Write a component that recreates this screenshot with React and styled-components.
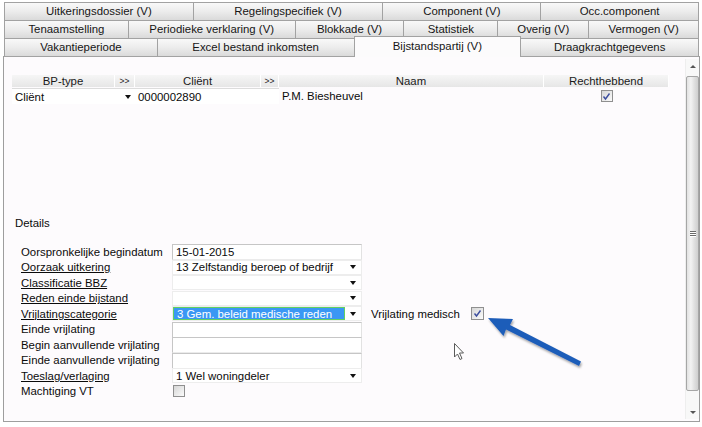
import React from 'react';
import styled, { createGlobalStyle } from 'styled-components';

const GlobalStyle = createGlobalStyle`
  html, body {
    margin: 0;
    padding: 0;
    background: #ffffff;
  }

  body {
    font-family: "Liberation Sans", Arial, sans-serif;
    font-size: 11.4px;
    color: #0a0a0a;
  }
`;

const Screen = styled.div`
  position: relative;
  width: 702px;
  height: 427px;
  overflow: hidden;
  background: #ffffff;
`;

const TabStrip = styled.div`
  display: flex;
  flex-direction: column;
  padding: 2px 3px 0 4px;
`;

const TabRow = styled.div`
  display: flex;
  height: 18px;
  align-items: flex-start;
`;

const Tab = styled.div`
  box-sizing: border-box;
  width: ${props => props.w}px;
  height: ${props => (props.selected ? 21 : 19)}px;
  margin-top: ${props => (props.selected ? -2 : 0)}px;
  margin-left: -1px;
  position: relative;
  z-index: ${props => (props.selected ? 2 : 1)};
  border: 1px solid #a2a2a2;
  border-bottom: ${props => (props.selected ? 'none' : '1px solid #a2a2a2')};
  background: ${props => (props.selected
    ? '#fcfbfc'
    : 'linear-gradient(to bottom, #f9f9f9 0%, #ececec 50%, #dadada 100%)')};
  display: flex;
  align-items: center;
  justify-content: center;
  padding-bottom: ${props => (props.selected ? 3 : 1)}px;
  white-space: nowrap;
  color: #151515;

  &:first-child {
    margin-left: 0;
  }
`;

const Panel = styled.div`
  box-sizing: border-box;
  margin-left: 3px;
  width: 697px;
  height: 366px;
  border: 1px solid #9e9e9e;
  background: #fdfbfd;
  display: flex;
`;

const Content = styled.div`
  flex: 1;
  padding: 18px 0 0 8px;
`;

const Table = styled.div`
  display: grid;
  grid-template-columns: 103px 20px 126px 18px 265px 125px;
  grid-template-rows: 12px 16px;
  row-gap: 1px;
`;

const HeadCell = styled.div`
  background: linear-gradient(to bottom, #f6f6f6, #e6e6e6);
  border-right: 1px solid #ffffff;
  display: flex;
  align-items: center;
  justify-content: center;
  line-height: 12px;
  font-size: ${props => (props.small ? '8.5px' : '11.4px')};
  color: #1a1a1a;
`;

const RowCell = styled.div`
  grid-column: span ${props => props.span || 1};
  display: flex;
  align-items: center;
  justify-content: ${props => (props.center ? 'center' : 'flex-start')};
  padding-left: ${props => (props.center ? 0 : 3)}px;
  box-sizing: border-box;
  background: ${props => (props.field ? '#ffffff' : 'transparent')};
  border-top: ${props => (props.field ? '1px solid #dcdcdc' : 'none')};
`;

const DropArrow = styled.span`
  width: 0;
  height: 0;
  border-left: 3.5px solid transparent;
  border-right: 3.5px solid transparent;
  border-top: 4px solid #111111;
  margin-left: auto;
  margin-right: ${props => props.right || 5}px;
`;

const Details = styled.div`
  margin: 112px 0 0 3px;
  line-height: 14px;
  height: 14px;
`;

const Form = styled.div`
  display: grid;
  grid-template-columns: 151px 190px auto;
  grid-auto-rows: 15.5px;
  margin: 14px 0 0 9px;
`;

const Label = styled.div`
  grid-column: 1;
  display: flex;
  align-items: center;
  text-decoration: ${props => (props.link ? 'underline' : 'none')};
  white-space: nowrap;
`;

const TextField = styled.div`
  grid-column: 2;
  box-sizing: border-box;
  height: 16px;
  border: 1px solid #c6c6c6;
  border-bottom-color: #ebebeb;
  border-right-color: #e2e2e2;
  background: #ffffff;
  display: flex;
  align-items: center;
  padding-left: 3px;
`;

const Combo = styled.div`
  grid-column: 2;
  box-sizing: border-box;
  height: 15px;
  border: 1px solid #ededed;
  background: #ffffff;
  display: flex;
  align-items: center;
`;

const ComboValue = styled.div`
  box-sizing: border-box;
  height: 100%;
  width: ${props => (props.focused ? '172px' : 'auto')};
  display: flex;
  align-items: center;
  padding-left: 3px;
  background: ${props => (props.focused ? '#3a97f4' : 'transparent')};
  border: ${props => (props.focused ? '1px solid #62d062' : 'none')};
  color: ${props => (props.focused ? '#ffffff' : '#0a0a0a')};
  white-space: nowrap;
`;

const Extra = styled.div`
  grid-column: 3;
  display: flex;
  align-items: center;
  gap: 11px;
  padding-left: 9px;
`;

const BoxCell = styled.div`
  grid-column: 2;
  display: flex;
  align-items: center;
  padding-left: 1px;
`;

const Box = styled.span`
  box-sizing: border-box;
  display: inline-flex;
  align-items: center;
  justify-content: center;
  width: ${props => props.size || 12}px;
  height: ${props => props.size || 12}px;
  border: 1px solid #8f8f8f;
  background: linear-gradient(135deg, #d6d6d6, #fbfbfb);
`;

const ScrollBar = styled.div`
  width: 13px;
  margin: 2px 0;
  display: flex;
  flex-direction: column;
  background: #f8f8f8;
  border-left: 1px solid #eeeeee;
`;

const ScrollButton = styled.div`
  height: 14px;
  display: flex;
  align-items: center;
  justify-content: center;
`;

const Triangle = styled.span`
  width: 0;
  height: 0;
  border-left: 3px solid transparent;
  border-right: 3px solid transparent;
  border-${props => (props.up ? 'bottom' : 'top')}: 3px solid #555555;
`;

const Track = styled.div`
  flex: 1;
  display: flex;
  padding: 3px 0 14px;
`;

const Thumb = styled.div`
  flex: 1;
  box-sizing: border-box;
  border: 1px solid #a6a6a6;
  border-radius: 2px;
  background: linear-gradient(to right, #e2e2e2, #f3f3f3 35%, #dedede 70%, #cfcfcf);
  display: flex;
  flex-direction: column;
  align-items: center;
  justify-content: center;
  gap: 1px;
`;

const Grip = styled.span`
  width: 6px;
  height: 1px;
  background: #6a6a6a;
  box-shadow: 0 1px 0 #ffffff;
`;

const Overlay = styled.svg`
  position: absolute;
  left: 0;
  top: 0;
  pointer-events: none;
`;

const tabRows = [
  [
    ['Uitkeringsdossier (V)', 190],
    ['Regelingspecifiek (V)', 191],
    ['Component (V)', 159],
    ['Occ.component', 159],
  ],
  [
    ['Tenaamstelling', 125],
    ['Periodieke verklaring (V)', 168],
    ['Blokkade (V)', 110],
    ['Statistiek', 95],
    ['Overig (V)', 92],
    ['Vermogen (V)', 111],
  ],
  [
    ['Vakantieperiode', 154],
    ['Excel bestand inkomsten', 198],
    ['Bijstandspartij (V)', 168, true],
    ['Draagkrachtgegevens', 179],
  ],
];

const Check = () => (
  <svg width="9" height="9" viewBox="0 0 9 9">
    <path d="M1.5 4.5 L3.5 7 L7.5 1.5" fill="none" stroke="#3c4d9e" strokeWidth="1.4" />
  </svg>
);

const CheckBox = ({ checked, size }) => (
  <Box size={size}>{checked && <Check />}</Box>
);

const App = () => (
  <Screen>
    <GlobalStyle />
    <TabStrip>
      {tabRows.map((row, i) => (
        <TabRow key={i}>
          {row.map(([text, w, selected]) => (
            <Tab key={text} w={w} selected={selected}>{text}</Tab>
          ))}
        </TabRow>
      ))}
    </TabStrip>
    <Panel>
      <Content>
        <Table>
          <HeadCell>BP-type</HeadCell>
          <HeadCell small>&gt;&gt;</HeadCell>
          <HeadCell>Cliënt</HeadCell>
          <HeadCell small>&gt;&gt;</HeadCell>
          <HeadCell>Naam</HeadCell>
          <HeadCell>Rechthebbend</HeadCell>

          <RowCell span={2} field>
            Cliënt
            <DropArrow right={4} />
          </RowCell>
          <RowCell span={2} field>0000002890</RowCell>
          <RowCell>P.M. Biesheuvel</RowCell>
          <RowCell center>
            <CheckBox checked />
          </RowCell>
        </Table>

        <Details>Details</Details>

        <Form>
          <Label>Oorspronkelijke begindatum</Label>
          <TextField>15-01-2015</TextField>

          <Label link>Oorzaak uitkering</Label>
          <Combo>
            <ComboValue>13 Zelfstandig beroep of bedrijf</ComboValue>
            <DropArrow />
          </Combo>

          <Label link>Classificatie BBZ</Label>
          <Combo><DropArrow /></Combo>

          <Label link>Reden einde bijstand</Label>
          <Combo><DropArrow /></Combo>

          <Label link>Vrijlatingscategorie</Label>
          <Combo>
            <ComboValue focused>3 Gem. beleid medische reden</ComboValue>
            <DropArrow />
          </Combo>
          <Extra>
            Vrijlating medisch
            <CheckBox checked size={13} />
          </Extra>

          <Label>Einde vrijlating</Label>
          <TextField />

          <Label>Begin aanvullende vrijlating</Label>
          <TextField />

          <Label>Einde aanvullende vrijlating</Label>
          <TextField />

          <Label link>Toeslag/verlaging</Label>
          <Combo>
            <ComboValue>1 Wel woningdeler</ComboValue>
            <DropArrow />
          </Combo>

          <Label>Machtiging VT</Label>
          <BoxCell>
            <CheckBox />
          </BoxCell>
        </Form>
      </Content>

      <ScrollBar>
        <ScrollButton><Triangle up /></ScrollButton>
        <Track>
          <Thumb>
            <Grip />
            <Grip />
            <Grip />
          </Thumb>
        </Track>
        <ScrollButton><Triangle /></ScrollButton>
      </ScrollBar>
    </Panel>

    <Overlay width="702" height="427" viewBox="0 0 702 427">
      <defs>
        <filter id="arrowShadow" x="-20%" y="-20%" width="140%" height="160%">
          <feDropShadow dx="1" dy="2" stdDeviation="1.2" floodColor="#000000" floodOpacity="0.35" />
        </filter>
      </defs>
      <polygon
        points="488,318 513,319 510,325 581,361.5 579,366 506,329.5 503.5,336"
        fill="#1f5db9"
        filter="url(#arrowShadow)"
      />
      <path
        d="M454.5 343.5 L454.5 357 L457.5 354 L460 359.5 L462 358.5 L459.5 353 L463.5 353 Z"
        fill="#ffffff"
        stroke="#5a5a5a"
        strokeWidth="1"
        strokeLinejoin="round"
      />
    </Overlay>
  </Screen>
);

export default App;
